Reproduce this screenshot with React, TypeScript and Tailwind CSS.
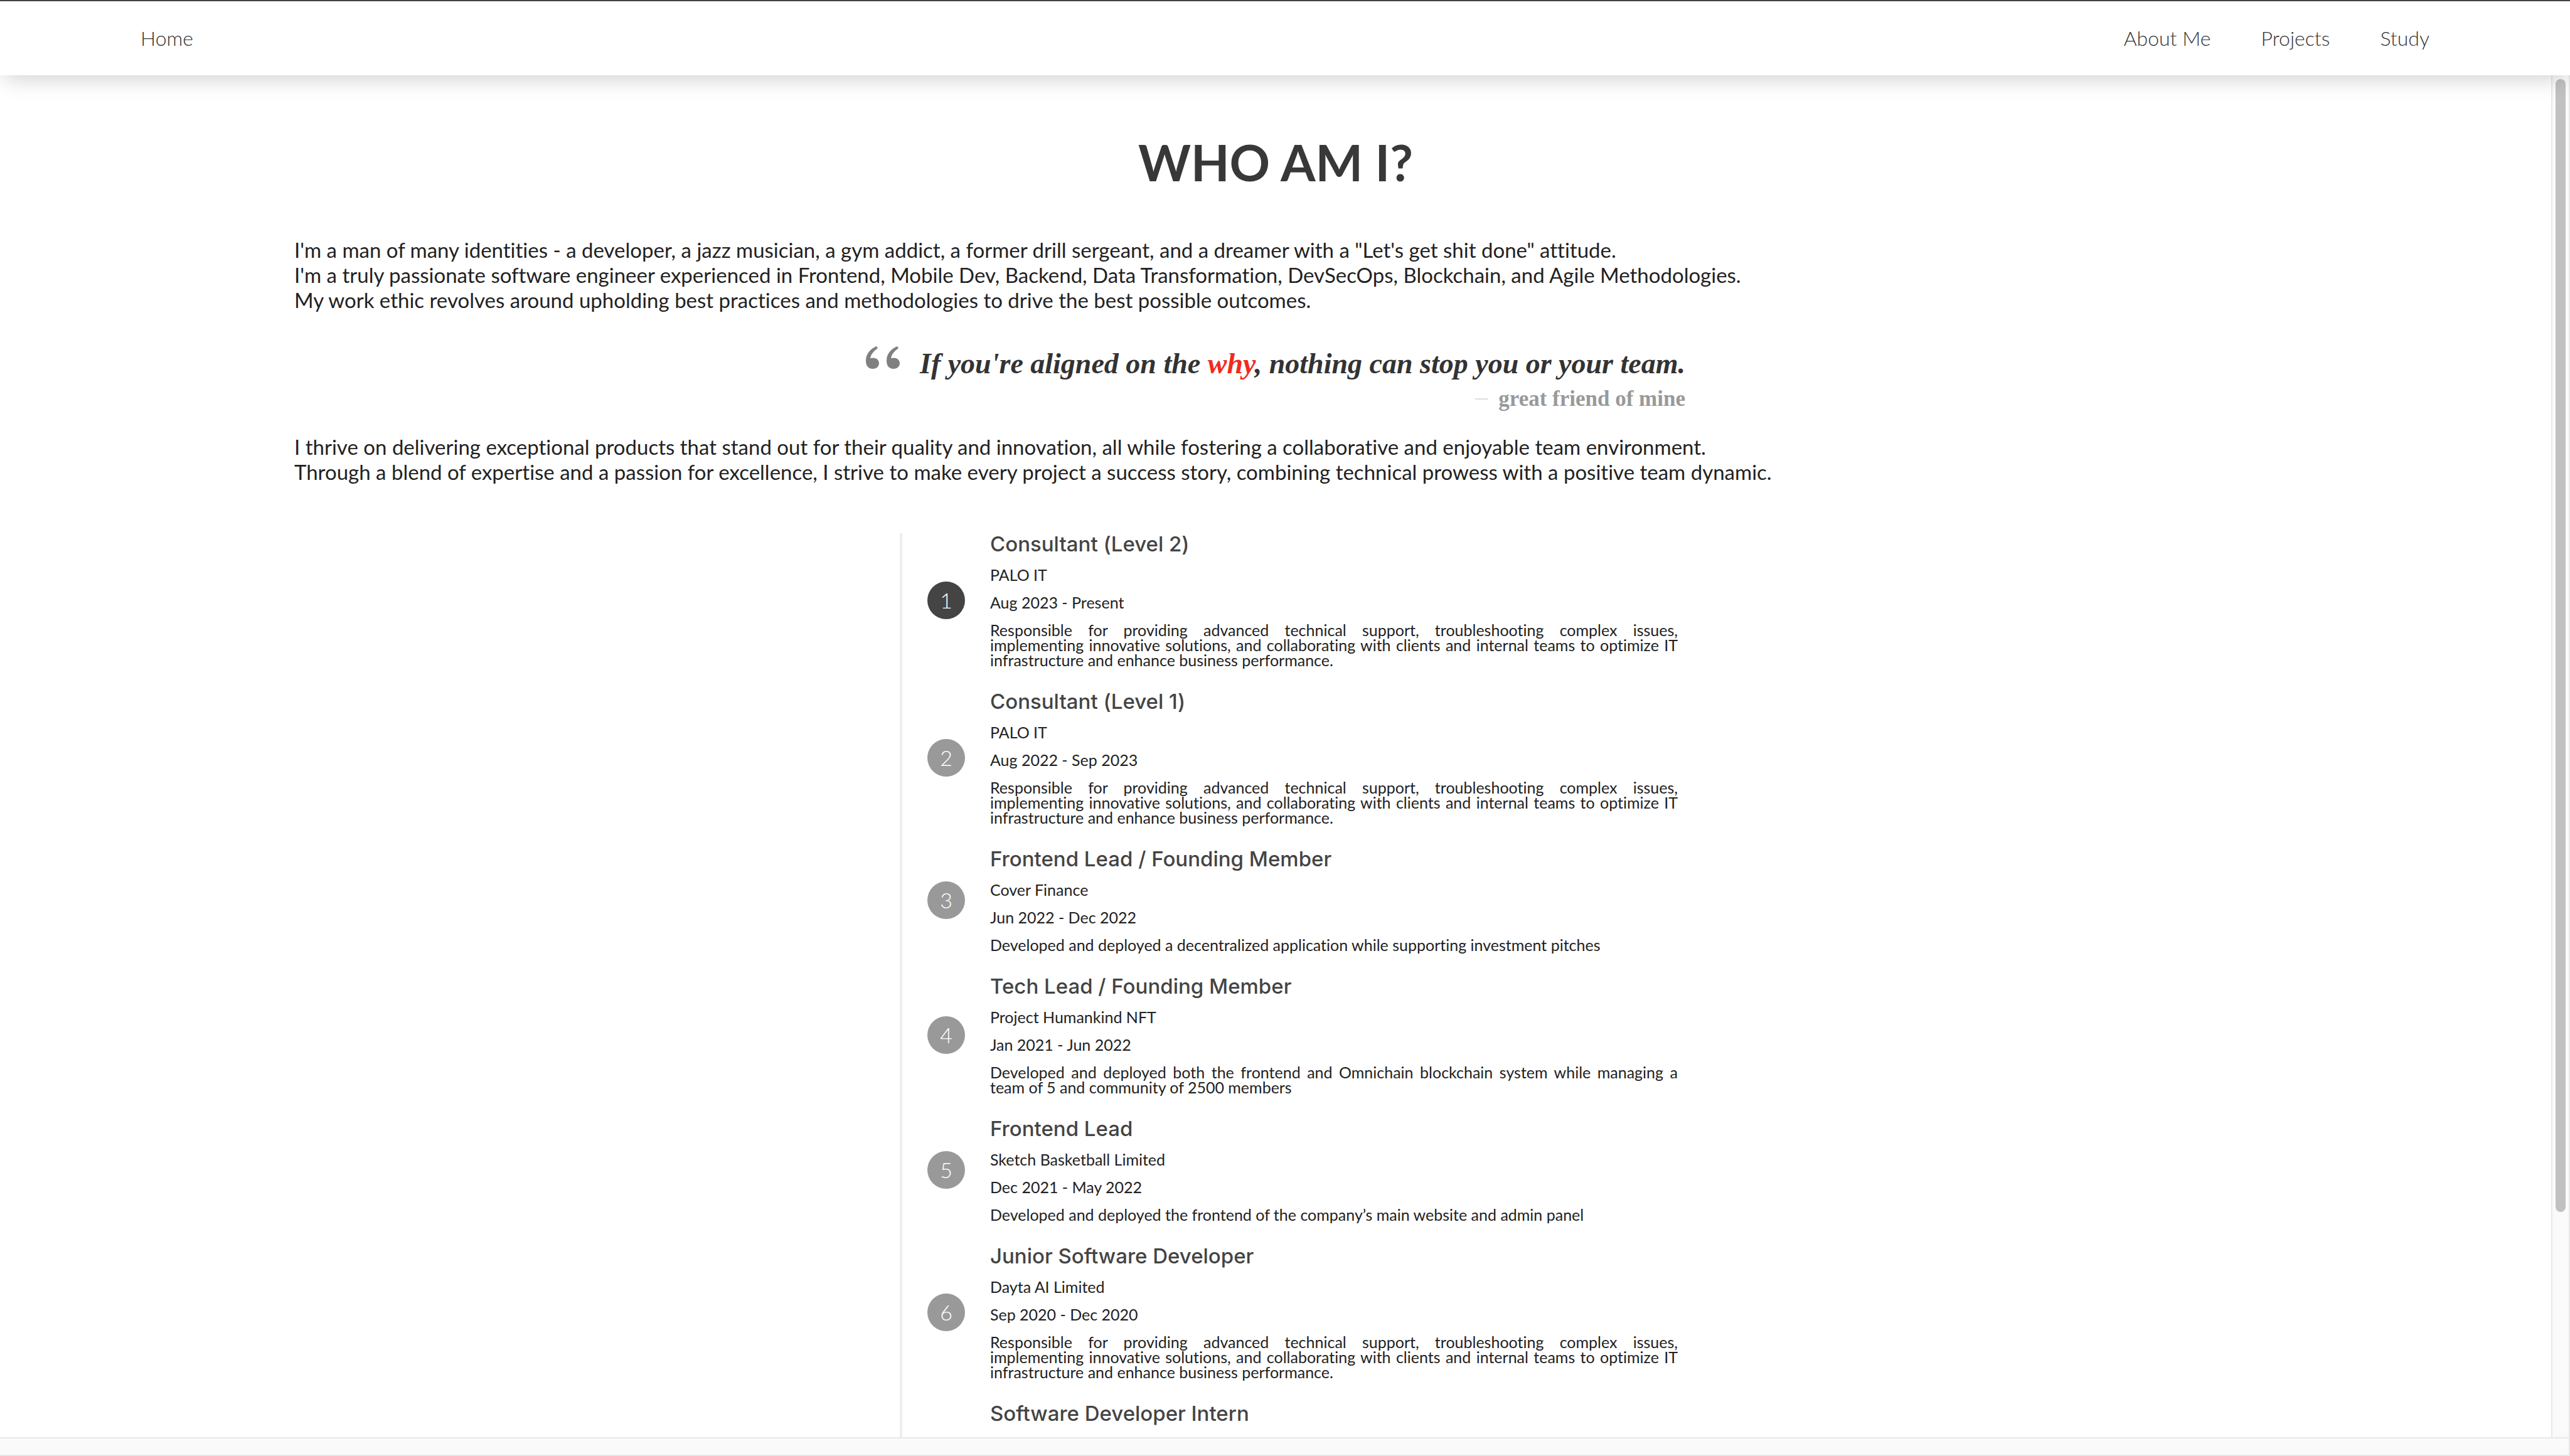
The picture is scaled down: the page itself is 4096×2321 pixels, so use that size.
const consulting = [
  "Responsible for providing advanced technical support, troubleshooting complex issues,",
  "implementing innovative solutions, and collaborating with clients and internal teams to optimize IT",
  "infrastructure and enhance business performance.",
];

const jobs = [
  { title: "Consultant (Level 2)", org: "PALO IT", dates: "Aug 2023 - Present", lines: consulting, circle: "bg-[#444444]" },
  { title: "Consultant (Level 1)", org: "PALO IT", dates: "Aug 2022 - Sep 2023", lines: consulting, circle: "bg-[#999999]" },
  { title: "Frontend Lead / Founding Member", org: "Cover Finance", dates: "Jun 2022 - Dec 2022", lines: ["Developed and deployed a decentralized application while supporting investment pitches"], circle: "bg-[#999999]" },
  { title: "Tech Lead / Founding Member", org: "Project Humankind NFT", dates: "Jan 2021 - Jun 2022", lines: ["Developed and deployed both the frontend and Omnichain blockchain system while managing a", "team of 5 and community of 2500 members"], circle: "bg-[#999999]" },
  { title: "Frontend Lead", org: "Sketch Basketball Limited", dates: "Dec 2021 - May 2022", lines: ["Developed and deployed the frontend of the company’s main website and admin panel"], circle: "bg-[#999999]" },
  { title: "Junior Software Developer", org: "Dayta AI Limited", dates: "Sep 2020 - Dec 2020", lines: consulting, circle: "bg-[#999999]" },
  { title: "Software Developer Intern", org: "", dates: "", lines: [], circle: "" },
];

function Job({ job, index }: { job: (typeof jobs)[number]; index: number }) {
  return (
    <li className="flex items-center gap-10 pb-[37px]">
      {job.org ? (
        <div className={`flex size-[60px] shrink-0 items-center justify-center rounded-full text-[34px] leading-none font-light text-white ${job.circle}`}>
          {index + 1}
        </div>
      ) : (
        <div className="w-[60px] shrink-0" />
      )}
      <div className="flex-1 text-[25px] leading-[24px] text-[#222222]">
        <h2 className="font-['Inter',sans-serif] text-[33px] leading-[34px] font-medium text-[#444444]">{job.title}</h2>
        {job.org && (
          <>
            <p className="mt-5">{job.org}</p>
            <p className="mt-5">{job.dates}</p>
            <p className="mt-5">
              {job.lines.map((line) => (
                <span key={line} className="block text-justify not-last:[text-align-last:justify]">
                  {line}{" "}
                </span>
              ))}
            </p>
          </>
        )}
      </div>
    </li>
  );
}

export default function App() {
  return (
    <div className="flex h-screen flex-col overflow-hidden bg-white font-['Lato',sans-serif] text-black [font-variant-ligatures:none]">
      <header className="relative z-10 border-t-2 border-[#444444] bg-white shadow-[0_10px_36px_-6px_rgba(0,0,0,0.2)]">
        <nav className="flex h-[118px] items-center justify-between px-[224px] text-[32px] font-light text-[#333333]">
          <a href="#home">Home</a>
          <div className="flex gap-20">
            <a href="#about">About Me</a>
            <a href="#projects">Projects</a>
            <a href="#study">Study</a>
          </div>
        </nav>
      </header>

      <div className="flex min-h-0 flex-1">
        <main className="min-w-0 flex-1 overflow-hidden px-[469px] pt-[92px]">
          <h1 className="text-center text-[80px] leading-[92px] font-bold text-[#383838]">WHO AM I?</h1>

          <p className="mt-[74px] text-[33px] leading-[40px] text-[#222222]">
            I'm a man of many identities - a developer, a jazz musician, a gym addict, a former drill sergeant, and a dreamer with a "Let's get shit done" attitude.
            <br />
            I'm a truly passionate software engineer experienced in Frontend, Mobile Dev, Backend, Data Transformation, DevSecOps, Blockchain, and Agile Methodologies.
            <br />
            My work ethic revolves around upholding best practices and methodologies to drive the best possible outcomes.
          </p>

          <figure className="mx-auto mt-[54px] flex w-fit gap-8 font-['Liberation_Serif',serif]">
            <svg viewBox="0 0 54 36" className="h-9 w-[54px]" fill="#808080" aria-hidden="true">
              <path id="mark" d="M17 0 L19 3 C12 8 8 13 7 19 C14 17 21 20 21 27 C21 32 17 36 11 36 C4 36 0 31 0 23 C0 12 7 4 17 0Z" />
              <use href="#mark" x="33" />
            </svg>
            <div>
              <blockquote className="text-[46px] leading-[56px] font-bold text-[#333333] italic">
                If you're aligned on the <span className="text-[#f02b1d]">why</span>, nothing can stop you or your team.
              </blockquote>
              <figcaption className="flex items-center justify-end gap-4 text-[35px] leading-[56px] font-bold text-[#999999]">
                <span className="h-[2px] w-[21px] bg-[#dddddd]" />
                great friend of mine
              </figcaption>
            </div>
          </figure>

          <p className="mt-7 text-[33px] leading-[40px] text-[#222222]">
            I thrive on delivering exceptional products that stand out for their quality and innovation, all while fostering a collaborative and enjoyable team environment.
            <br />
            Through a blend of expertise and a passion for excellence, I strive to make every project a success story, combining technical prowess with a positive team dynamic.
          </p>

          <div className="mt-[78px] flex justify-center pl-[42px]">
            <ol className="w-[1240px] border-l-4 border-[#eeeeee] pl-10">
              {jobs.map((job, i) => (
                <Job key={job.title} job={job} index={i} />
              ))}
            </ol>
          </div>
        </main>
        <div className="w-[30px] shrink-0 border-x-2 border-[#e8e8e8] bg-[#fafafa] px-[5px] pt-[6px]">
          <div className="h-[83.4%] rounded-full bg-[#c1c1c1]" />
        </div>
      </div>
      <footer className="h-[30px] shrink-0 border-y-2 border-r-2 border-[#e8e8e8] bg-[#fafafa]" />
    </div>
  );
}
